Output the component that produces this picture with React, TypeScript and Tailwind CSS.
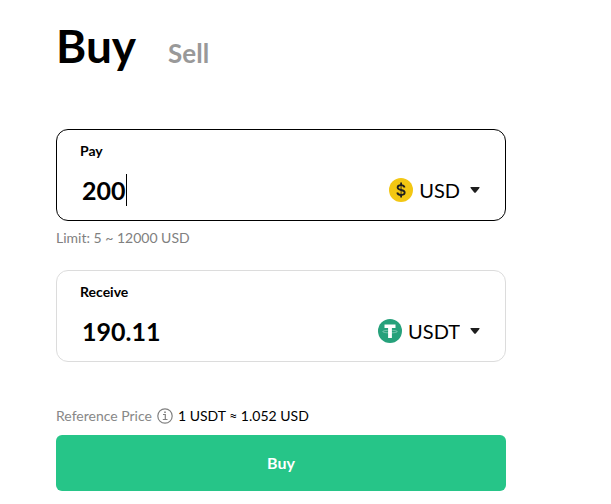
import React, { useState } from 'react';

const RATE = 1.052;

function DollarCoin() {
  return (
    <svg viewBox="0 0 24 24" className="w-6 h-6 shrink-0" aria-hidden="true">
      <circle cx="12" cy="12" r="12" fill="#f3c713" />
      <path
        d="M15.6 9.4C15.2 7.9 13.9 7.1 12.1 7.1C10 7.1 8.6 8 8.6 9.5C8.6 11 9.9 11.5 12.1 12C14.4 12.5 15.7 13.1 15.7 14.6C15.7 16.1 14.2 17 12.1 17C10 17 8.6 16.1 8.2 14.5"
        fill="none"
        stroke="#1e1e1e"
        strokeWidth="1.8"
      />
      <path d="M12.1 4.6V7.5M12.1 16.6V19.4" fill="none" stroke="#1e1e1e" strokeWidth="1.8" />
      <path d="M12.1 7.5V16.6" fill="none" stroke="#1e1e1e" strokeWidth="0.8" />
    </svg>
  );
}

function TetherCoin() {
  return (
    <svg viewBox="0 0 24 24" className="w-6 h-6 shrink-0" aria-hidden="true">
      <circle cx="12" cy="12" r="12" fill="#26a17b" />
      <path
        d="M9.8 11.3C6.8 11.5 4.7 12 4.7 12.6C4.7 13.3 8 13.9 12 13.9S19.3 13.3 19.3 12.6C19.3 12 17.2 11.5 14.2 11.3"
        fill="none"
        stroke="#fff"
        strokeWidth="0.7"
        opacity="0.5"
      />
      <path d="M6.5 5.4H17.5V8.9H13.9V19H10.1V8.9H6.5Z" fill="#fff" />
    </svg>
  );
}

interface AmountCardProps {
  id: string;
  label: string;
  value: string;
  onChange: (value: string) => void;
  active?: boolean;
  currency: string;
  icon: React.ReactNode;
}

function AmountCard({ id, label, value, onChange, active, currency, icon }: AmountCardProps) {
  return (
    <div
      className={`rounded-xl border pl-[23px] pr-[25px] pt-[11px] pb-[14px] ${active ? 'border-black' : 'border-[#dcdcdc]'}`}
    >
      <label htmlFor={id} className="block text-sm leading-5 font-bold">
        {label}
      </label>
      <div className="mt-[13px] flex h-8 items-center justify-between">
        <div className="flex items-center">
          <input
            id={id}
            type="text"
            inputMode="decimal"
            value={value}
            onChange={(e) => onChange(e.target.value)}
            className="field-sizing-content pl-0.5 text-[25px] leading-8 font-bold outline-none"
          />
          {active && <span className="h-8 w-px bg-black" />}
        </div>
        <div className="flex items-center">
          {icon}
          <select
            aria-label={`${label} currency`}
            className="ml-1.5 appearance-none field-sizing-content bg-transparent text-xl leading-8 outline-none"
          >
            <option>{currency}</option>
          </select>
          <svg viewBox="0 0 10 6" className="ml-2.5 h-1.5 w-2.5" aria-hidden="true">
            <path d="M1 0H9Q10 0.2 9.4 1.1L5.8 5.4Q5 6.2 4.2 5.4L0.6 1.1Q0 0.2 1 0Z" fill="#1e1e1e" />
          </svg>
        </div>
      </div>
    </div>
  );
}

export default function App() {
  const [pay, setPay] = useState('200');
  const [receive, setReceive] = useState('190.11');

  const handlePay = (value: string) => {
    setPay(value);
    setReceive(((parseFloat(value) || 0) / RATE).toFixed(2));
  };

  const handleReceive = (value: string) => {
    setReceive(value);
    setPay(((parseFloat(value) || 0) * RATE).toFixed(2));
  };

  return (
    <main className="min-h-screen bg-white pl-14 pr-4 pt-4 pb-3 font-[Lato,sans-serif] text-black">
      <div className="w-full max-w-[450px]">
        <div className="flex items-baseline gap-8">
          <button type="button" className="text-[46px] leading-[60px] font-bold">
            Buy
          </button>
          <button type="button" className="text-[26px] font-bold text-[#999999]">
            Sell
          </button>
        </div>

        <div className="mt-[53px]">
          <AmountCard id="pay" label="Pay" value={pay} onChange={handlePay} active currency="USD" icon={<DollarCoin />} />
        </div>
        <p className="mt-[7px] text-sm leading-5 text-[#808080]">Limit: 5 ~ 12000 USD</p>

        <div className="mt-[22px]">
          <AmountCard id="receive" label="Receive" value={receive} onChange={handleReceive} currency="USDT" icon={<TetherCoin />} />
        </div>

        <div className="mt-11 flex items-center gap-[5px] text-sm leading-5">
          <span className="text-[#888888]">Reference Price</span>
          <svg viewBox="0 0 16 16" className="h-4 w-4" fill="none" stroke="#808080" aria-hidden="true">
            <circle cx="8" cy="8" r="7.2" strokeWidth="1.2" />
            <path d="M6 6.5H8.3V11.5M5.8 11.5H10.5" strokeWidth="1.2" />
            <path d="M7.2 4.2H8.8" strokeWidth="1.5" />
          </svg>
          <span>1 USDT ≈ {RATE} USD</span>
        </div>

        <button type="button" className="mt-[9px] h-14 w-full rounded-md bg-[#26c588] text-base font-bold text-white">
          Buy
        </button>
      </div>
    </main>
  );
}
